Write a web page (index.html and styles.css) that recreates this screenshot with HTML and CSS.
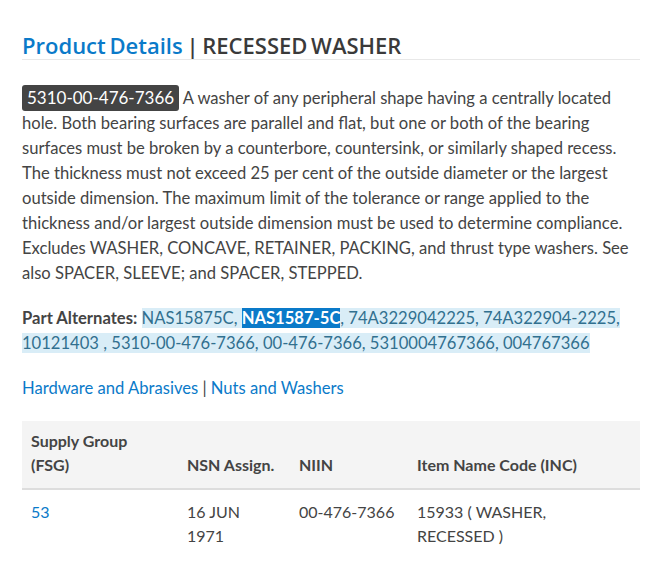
FILE: index.html
```html
<html lang="en">
  <head>
    <link rel="stylesheet" href="styles.css">
  </head>
  <body>
    <div id="product">
      <h2 class="title"><span class="accent">Product Details</span> | RECESSED WASHER</h2>
      <p class="desc"><span class="nsn">5310-00-476-7366</span> A washer of any peripheral shape having a centrally located hole. Both bearing surfaces are parallel and flat, but one or both of the bearing surfaces must be broken by a counterbore, countersink, or similarly shaped recess. The thickness must not exceed 25 per cent of the outside diameter or the largest outside dimension. The maximum limit of the tolerance or range applied to the thickness and/or largest outside dimension must be used to determine compliance. Excludes WASHER, CONCAVE, RETAINER, PACKING, and thrust type washers. See also SPACER, SLEEVE; and SPACER, STEPPED.</p>
      <p class="alts"><b>Part Alternates:</b> <span class="hl">NAS15875C, <span class="hit">NAS1587-5C</span>, 74A3229042225, 74A322904-2225, 10121403 , 5310-00-476-7366, 00-476-7366, 5310004767366, 004767366</span></p>
      <p class="cats"><a href="#">Hardware and Abrasives</a> | <a href="#">Nuts and Washers</a></p>
      <table class="specs">
        <thead>
          <tr>
            <th class="c1">Supply Group (FSG)</th>
            <th class="c2">NSN Assign.</th>
            <th class="c3">NIIN</th>
            <th class="c4">Item Name Code (INC)</th>
          </tr>
        </thead>
        <tbody>
          <tr>
            <td><a href="#">53</a></td>
            <td>16 JUN 1971</td>
            <td>00-476-7366</td>
            <td class="c4">15933 ( WASHER, RECESSED )</td>
          </tr>
        </tbody>
      </table>
    </div>
  </body>
</html>
```

FILE: styles.css
```css
body, html {
  margin: 0;
  background: #fff;
  color: #444;
  font-family: Lato, 'Open Sans', sans-serif;
  font-size: 16.6px;
}
a {
  color: #0a7ac9;
  text-decoration: none;
}
#product {
  padding: 31px 23px 0 22px;
}
.title {
  margin: 0;
  padding-bottom: 0;
  border-bottom: solid 1px #e8e8e8;
  font-family: 'Open Sans', sans-serif;
  font-size: 22px;
  font-weight: 600;
  color: #3a3a3a;
  line-height: 28px;
  word-spacing: -2px;
}
.title .accent {
  color: #0a7ac9;
}
.desc {
  margin: 25px 0 0;
  line-height: 25px;
}
.nsn {
  background: #444;
  color: #fff;
  border-radius: 3px;
  padding: 2px 5px 3px;
  font-size: 17px;
}
.alts {
  margin: 20px 0 0;
  line-height: 25px;
}
.alts b {
  font-weight: bold;
}
.hl {
  background: #d9edf7;
  color: #31708f;
}
.hit {
  background: #0a7ac9;
  color: #fff;
  font-weight: bold;
}
.cats {
  margin: 20px 0 0;
  line-height: 25px;
}
.specs {
  margin-top: 20px;
  width: 100%;
  table-layout: fixed;
  border-collapse: collapse;
  line-height: 24px;
}
.specs thead {
  background: #f4f4f4;
}
.specs th {
  text-align: left;
  vertical-align: bottom;
  padding: 8px 9px 11px;
  border-bottom: solid 2px #ddd;
}
.specs td {
  vertical-align: top;
  padding: 10px 9px;
}
.specs .c1 { width: 138px; }
.specs .c2 { width: 94px; }
.specs .c3 { width: 100px; }
.specs td.c4 { padding-right: 40px; }
```
